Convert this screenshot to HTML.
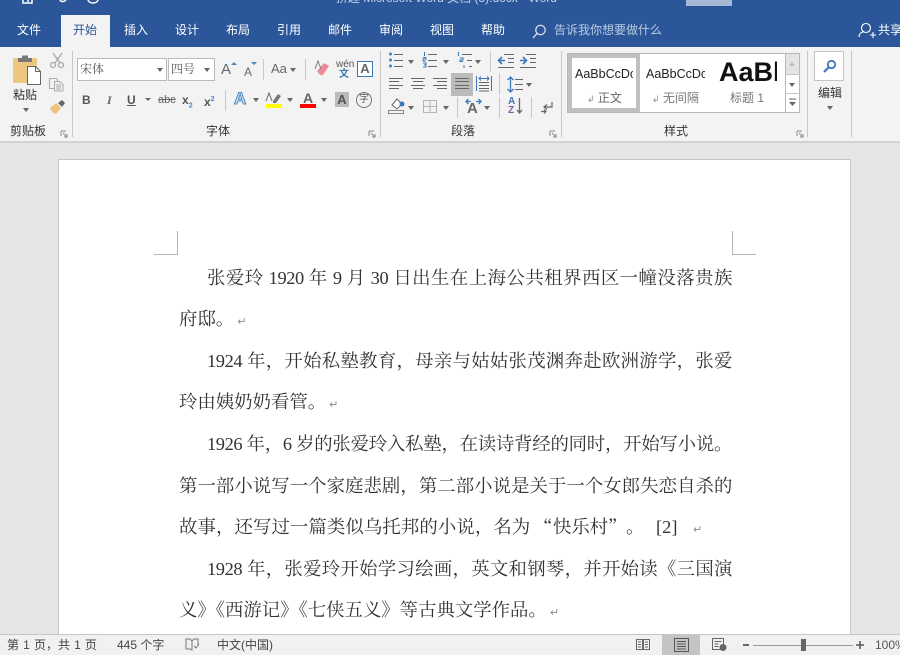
<!DOCTYPE html>
<html><head><meta charset="utf-8">
<style>
*{margin:0;padding:0;box-sizing:border-box}
html,body{width:900px;height:655px;overflow:hidden;background:#e6e6e6}
body{position:relative;font-family:"Liberation Sans","Noto Sans CJK SC",sans-serif;color:#444}
.a{position:absolute;white-space:nowrap}
.tab{position:absolute;top:20px;font-size:12px;color:#fff;line-height:20px;white-space:nowrap}
.sep{position:absolute;width:1px;background:#c8c8c8}
.gl{position:absolute;top:122px;font-size:12px;color:#333;line-height:18px;white-space:nowrap}
.l{position:absolute;left:179px;width:553px;font-family:"Liberation Serif","Noto Serif CJK SC",serif;font-size:18.4px;line-height:26px;color:#333;text-align:justify;text-align-last:justify;height:26px;letter-spacing:-.4px}
.n{text-align-last:left;letter-spacing:0;white-space:nowrap}
.p{position:absolute;font-family:"Liberation Serif","Noto Serif CJK SC",serif;font-size:18.4px;line-height:26px;color:#333;white-space:nowrap;top:514px}
.s{position:absolute;font-size:12px;line-height:16px;color:#444;white-space:nowrap;top:637px}
.ar{position:absolute;width:0;height:0;border-left:3.5px solid transparent;border-right:3.5px solid transparent;border-top:4px solid #666}
svg{position:absolute;overflow:visible}
.m{font-size:11px;color:#888;font-family:"Liberation Sans","DejaVu Sans",sans-serif;margin-left:3px}
</style></head><body>

<!-- title + tabs -->
<div class="a" style="left:0;top:0;width:900px;height:47px;background:#2b579a"></div>
<div class="a" style="left:686px;top:0;width:46px;height:6px;background:#a5b8d4"></div>
<div class="a" style="left:336px;top:-9px;font-size:12px;color:#c5d2e6;line-height:14px">拼趣 Microsoft Word 文档 (3).docx - Word</div>
<svg style="left:20px;top:0" width="80" height="6"><path d="M3 0v3h9V0M8 0v2M40 0c1 2 4 2 6 0M68 0c1 4 9 4 10 0" stroke="#fff" stroke-width="1.5" fill="none"/></svg>
<div class="a" style="left:61px;top:15px;width:49px;height:32px;background:#f3f3f3"></div>
<div class="tab" style="left:17px">文件</div>
<div class="tab" style="left:73px;color:#2b579a">开始</div>
<div class="tab" style="left:124px">插入</div>
<div class="tab" style="left:175px">设计</div>
<div class="tab" style="left:226px">布局</div>
<div class="tab" style="left:277px">引用</div>
<div class="tab" style="left:328px">邮件</div>
<div class="tab" style="left:379px">审阅</div>
<div class="tab" style="left:430px">视图</div>
<div class="tab" style="left:481px">帮助</div>
<svg style="left:532px;top:24px" width="15" height="15"><circle cx="8.5" cy="6" r="4.7" fill="none" stroke="#dfe6f1" stroke-width="1.2"/><path d="M5 9.5L1 14" stroke="#dfe6f1" stroke-width="1.3"/></svg>
<div class="tab" style="left:554px;color:#bccbe1">告诉我你想要做什么</div>
<svg style="left:858px;top:22px" width="18" height="17"><circle cx="8" cy="6" r="4.5" fill="none" stroke="#fff" stroke-width="1.1"/><path d="M1 15c0-4 3-5 5-5.500M12 13h6M15 10v6" fill="none" stroke="#fff" stroke-width="1.1"/></svg>
<div class="tab" style="left:878px">共享</div>

<!-- ribbon -->
<div class="a" style="left:0;top:47px;width:900px;height:94px;background:#f3f3f3"></div>
<div class="a" style="left:0;top:141px;width:900px;height:2px;background:#d2d2d2"></div>

<!-- clipboard -->
<svg style="left:0;top:0" width="72" height="120">
<rect x="13" y="58" width="24" height="25" rx="1.500" fill="#eec77f"/>
<path d="M18 58h14v4H18z" fill="#777"/><path d="M22 55.500h6v3h-6z" fill="#777"/>
<path d="M27.500 66.500h8l5 5v13h-13z" fill="#fff" stroke="#666"/><path d="M35.500 66.500v5h5" fill="none" stroke="#666"/>
<path d="M53 53l7 10M62 53l-7 10" stroke="#aaa" stroke-width="1.400" fill="none"/><circle cx="53" cy="65" r="2.500" fill="none" stroke="#aaa" stroke-width="1.300"/><circle cx="61" cy="65" r="2.500" fill="none" stroke="#aaa" stroke-width="1.300"/>
<path d="M49.500 78.500h7l1 1v9h-8z" fill="#f3f3f3" stroke="#aaa"/><path d="M54.500 81.500h5l3.500 3v6.500h-8.500z" fill="#f3f3f3" stroke="#aaa"/><path d="M56 85h5M56 87h5M56 89h5" stroke="#aaa"/>
<path d="M50 108l6-5 5 5-5 6c-3-1-5-3-6-6z" fill="#ecc27c"/><path d="M58 103l4-3 3 3-3 4z" fill="#666"/>
</svg>
<div class="a" style="left:13px;top:87px;font-size:12px;color:#333;line-height:16px">粘贴</div>
<div class="ar" style="left:23px;top:108px"></div>
<div class="gl" style="left:10px">剪贴板</div>
<div class="sep" style="left:72px;top:51px;height:86px"></div>

<!-- font -->
<div class="a" style="left:77px;top:58px;width:90px;height:23px;background:#fff;border:1px solid #bbb;font-size:12px;line-height:21px;padding-left:2px;color:#555;font-family:'Liberation Serif','Noto Serif CJK SC',serif">宋体</div>
<div class="ar" style="left:157px;top:68px"></div>
<div class="a" style="left:168px;top:58px;width:47px;height:23px;background:#fff;border:1px solid #bbb;font-size:12px;line-height:21px;padding-left:2px;color:#555;font-family:'Liberation Serif','Noto Serif CJK SC',serif">四号</div>
<div class="ar" style="left:204px;top:68px"></div>
<div class="a" style="left:221px;top:60px;font-size:15px;line-height:20px;color:#666">A</div>
<div class="a" style="left:244px;top:63px;font-size:12px;line-height:18px;color:#666">A</div>
<div class="a" style="left:231px;top:62px;width:0;border-left:3px solid transparent;border-right:3px solid transparent;border-bottom:3px solid #4a86c5"></div>
<div class="a" style="left:251px;top:62px;width:0;border-left:3px solid transparent;border-right:3px solid transparent;border-top:3px solid #4a86c5"></div>
<div class="sep" style="left:263px;top:59px;height:21px"></div>
<div class="a" style="left:271px;top:60px;font-size:13px;line-height:18px;color:#666">Aa</div>
<div class="ar" style="left:290px;top:68px"></div>
<div class="sep" style="left:305px;top:59px;height:21px"></div>
<svg style="left:314px;top:60px" width="16" height="17"><path d="M3 11l7-8 5 3-6 9H6z" fill="#ee8b98"/><path d="M1 9L4 1l3 8" fill="none" stroke="#777"/></svg>
<div class="a" style="left:336px;top:59px;font-size:10px;line-height:11px;color:#555">wén</div>
<div class="a" style="left:339px;top:69px;font-size:10px;line-height:11px;color:#3a75b5;font-weight:bold">文</div>
<div class="a" style="left:357px;top:61px;width:16px;height:16px;border:1px solid #3c78b5;background:#fff;font-size:13px;font-weight:bold;line-height:14px;text-align:center;color:#666">A</div>

<div class="a" style="left:82px;top:91px;font-size:12px;font-weight:bold;line-height:18px;color:#555">B</div>
<div class="a" style="left:107px;top:91px;font-size:12px;font-style:italic;font-family:'Liberation Serif',serif;font-weight:bold;line-height:18px;color:#666">I</div>
<div class="a" style="left:127px;top:91px;font-size:12px;font-weight:bold;line-height:18px;color:#555;text-decoration:underline">U</div>
<div class="ar" style="left:145px;top:98px;border-top-width:3px"></div>
<div class="a" style="left:158px;top:92px;font-size:11px;line-height:17px;color:#666;text-decoration:line-through">abc</div>
<div class="a" style="left:182px;top:91px;font-size:12px;font-weight:bold;line-height:18px;color:#555">x<sub style="font-size:7px;color:#4a86c5">2</sub></div>
<div class="a" style="left:204px;top:91px;font-size:12px;font-weight:bold;line-height:18px;color:#555">x<sup style="font-size:7px;color:#4a86c5">2</sup></div>
<div class="sep" style="left:225px;top:90px;height:21px"></div>
<div class="a" style="left:234px;top:89px;font-size:17px;font-weight:bold;line-height:20px;color:#dbe8f5;-webkit-text-stroke:1px #4a86c5">A</div>
<div class="ar" style="left:253px;top:98px"></div>
<svg style="left:265px;top:92px" width="18" height="16"><path d="M8 9l5-7 3 2-5 7H8z" fill="#777"/><path d="M1 9l3-8 3 8" fill="none" stroke="#666"/><rect x="1" y="12" width="16" height="4" fill="#ff0"/></svg>
<div class="ar" style="left:287px;top:98px"></div>
<div class="a" style="left:300px;top:91px;width:16px;height:14px;font-size:14px;font-weight:bold;line-height:14px;text-align:center;color:#666">A</div>
<div class="a" style="left:300px;top:104px;width:16px;height:4px;background:#f00"></div>
<div class="ar" style="left:321px;top:98px"></div>
<div class="a" style="left:335px;top:92px;width:14px;height:15px;background:#bbb;font-size:13px;font-weight:bold;line-height:15px;text-align:center;color:#555">A</div>
<div class="a" style="left:356px;top:92px;width:16px;height:16px;border:1px solid #777;border-radius:50%;font-size:10px;line-height:14px;text-align:center;color:#555">字</div>
<div class="gl" style="left:206px">字体</div>
<svg style="left:60px;top:130px" width="320" height="8"><path d="M1 1h5M1 1v5M3 3l4 4M4 7h3V4" stroke="#888" fill="none"/><path d="M309 1h5M309 1v5M311 3l4 4M312 7h3V4" stroke="#888" fill="none"/></svg>
<div class="sep" style="left:380px;top:51px;height:86px"></div>

<!-- paragraph: highlight first -->
<div class="a" style="left:451px;top:73px;width:22px;height:23px;background:#bbb"></div>
<svg style="left:0;top:0" width="560" height="120" fill="none">
<!-- row1 bullets -->
<g fill="#4a7fb8"><circle cx="390.500" cy="54" r="1.500"/><circle cx="390.500" cy="60" r="1.500"/><circle cx="390.500" cy="66" r="1.500"/></g>
<path d="M394 54.500h9M394 60.500h9M394 66.500h9" stroke="#666"/>
<!-- numbering -->
<path d="M424.500 52v4M423 57.500h3v1.500h-3v2h3M423 63h3v1.800h-2M426 64.800V67h-3" stroke="#3c78b5"/>
<path d="M428 54.500h9M428 60.500h9M428 66.500h9" stroke="#666"/>
<!-- multilevel -->
<path d="M458.500 52v4M460 58h3v2h-3v1.500h3M464 65v3" stroke="#3c78b5"/>
<path d="M462 54.500h10M467 60.500h5M469 66.500h3" stroke="#666"/>
<!-- indent -->
<path d="M504 54.500h10M508 58.500h6M508 62.500h6M498 67.500h16" stroke="#666"/>
<path d="M505 60.500h-6M502 57l-3.500 3.500 3.500 3.500" stroke="#3c78b5" stroke-width="1.600"/>
<path d="M526 54.500h10M530 58.500h6M530 62.500h6M520 67.500h16" stroke="#666"/>
<path d="M520 60.500h6M523 57l3.500 3.500-3.500 3.500" stroke="#3c78b5" stroke-width="1.600"/>
<!-- align -->
<path d="M389 78.500h14M389 81.500h10M389 85.500h14M389 88.500h10" stroke="#666"/>
<path d="M411 78.500h14M413 81.500h10M411 85.500h14M413 88.500h10" stroke="#666"/>
<path d="M433 78.500h14M437 81.500h10M433 85.500h14M437 88.500h10" stroke="#666"/>
<path d="M455 78.500h14M455 81.500h14M455 85.500h14M455 88.500h14" stroke="#666"/>
<!-- distributed -->
<path d="M476.500 76v15M491.500 76v15" stroke="#3c78b5"/><path d="M479 78.500h10M481 76.500l-2 2 2 2M487 76.500l2 2-2 2" stroke="#3c78b5"/>
<path d="M479 82.500h10M479 85.500h10M479 88.500h10M479 91h10" stroke="#666"/>
<!-- line spacing -->
<path d="M510.500 77v15M507.500 80l3-3 3 3M507.500 89l3 3 3-3" stroke="#3c78b5" stroke-width="1.300"/>
<path d="M515 79.500h8M515 84.500h8M515 89.500h8" stroke="#666"/>
<!-- shading -->
<path d="M392 105l5-6 5 5-5 5z" fill="#fff" stroke="#666"/><circle cx="402" cy="104" r="2.500" fill="#3c78b5"/>
<rect x="388.500" y="110.500" width="15" height="3" fill="#f3f3f3" stroke="#888"/>
<!-- borders -->
<path d="M423.500 100.500h13v12h-13zM430 100.500v12M423.500 106.500h13" stroke="#777" stroke-dasharray="1 1"/>
<!-- char spacing arrows -->
<path d="M466 101.500h5M468.500 99l-2.500 2.500 2.500 2.500M476 101.500h5M478.500 99l2.500 2.500-2.500 2.500" stroke="#3c78b5" stroke-width="1.300"/>
<!-- sort arrow -->
<path d="M519.500 98v15M517 110l2.500 3 2.500-3" stroke="#666" stroke-width="1.300"/>
<!-- enter -->
<path d="M552 102v5h-7M547 104.500l-3 2.500 3 2.500" stroke="#666" stroke-width="1.200"/><path d="M541 111.500h5M544 109.500l2 2-2 2" stroke="#666" stroke-width="1.200"/>
</svg>
<div class="ar" style="left:408px;top:60px"></div>
<div class="ar" style="left:443px;top:60px"></div>
<div class="ar" style="left:475px;top:60px"></div>
<div class="sep" style="left:490px;top:52px;height:20px"></div>
<div class="sep" style="left:499px;top:73px;height:22px"></div>
<div class="ar" style="left:526px;top:83px"></div>
<div class="ar" style="left:408px;top:106px"></div>
<div class="ar" style="left:443px;top:106px"></div>
<div class="sep" style="left:457px;top:97px;height:21px"></div>
<div class="a" style="left:467px;top:103px;font-size:15px;font-weight:bold;line-height:12px;color:#666">A</div>
<div class="ar" style="left:484px;top:106px"></div>
<div class="sep" style="left:499px;top:97px;height:21px"></div>
<div class="a" style="left:508px;top:97px;font-size:10px;font-weight:bold;line-height:9px;color:#3c78b5">A</div>
<div class="a" style="left:508px;top:106px;font-size:10px;font-weight:bold;line-height:9px;color:#8a5aa8">Z</div>
<div class="sep" style="left:531px;top:97px;height:21px"></div>
<div class="gl" style="left:451px">段落</div>
<svg style="left:549px;top:130px" width="9" height="8"><path d="M1 1h5M1 1v5M3 3l4 4M4 7h3V4" stroke="#888" fill="none"/></svg>
<div class="sep" style="left:561px;top:51px;height:86px"></div>

<!-- styles -->
<div class="a" style="left:567px;top:53px;width:233px;height:60px;background:#fff;border:1px solid #b8b8b8"></div>
<div class="a" style="left:568px;top:54px;width:72px;height:58px;background:#fff;border:4px solid #c0c0c0"></div>
<div class="a" style="left:575px;top:66px;width:58px;overflow:hidden;font-size:12.500px;line-height:16px;color:#222">AaBbCcDc</div>
<div class="a" style="left:646px;top:66px;width:59px;overflow:hidden;font-size:12.500px;line-height:16px;color:#222">AaBbCcDc</div>
<div class="a" style="left:719px;top:55px;width:58px;overflow:hidden;font-size:27px;font-weight:bold;line-height:34px;color:#111">AaBbC</div>
<div class="a" style="left:587px;top:90px;font-size:12px;line-height:16px;color:#666"><span style="font-size:9px;color:#888">↲</span> 正文</div>
<div class="a" style="left:652px;top:90px;font-size:12px;line-height:16px;color:#777"><span style="font-size:9px;color:#888">↲</span> 无间隔</div>
<div class="a" style="left:730px;top:90px;font-size:12px;line-height:16px;color:#777">标题 1</div>
<div class="a" style="left:785px;top:53px;width:15px;height:60px;border:1px solid #b8b8b8;background:#fff"></div>
<div class="a" style="left:786px;top:54px;width:13px;height:20px;background:#e4e4e4"></div>
<div class="sep" style="left:785px;top:74px;width:15px;height:1px"></div>
<div class="sep" style="left:785px;top:93px;width:15px;height:1px"></div>
<div class="a" style="left:789px;top:62px;border-left:3.500px solid transparent;border-right:3.500px solid transparent;border-bottom:4px solid #bbb"></div>
<div class="ar" style="left:789px;top:83px"></div>
<svg style="left:789px;top:99px" width="8" height="9"><path d="M0 0h7" stroke="#666"/><path d="M0 3h7L3.500 7z" fill="#666"/></svg>
<div class="gl" style="left:664px">样式</div>
<svg style="left:796px;top:130px" width="9" height="8"><path d="M1 1h5M1 1v5M3 3l4 4M4 7h3V4" stroke="#888" fill="none"/></svg>
<div class="sep" style="left:807px;top:51px;height:86px"></div>

<!-- edit -->
<div class="a" style="left:814px;top:51px;width:30px;height:30px;background:#fff;border:1px solid #c4c4c4"></div>
<svg style="left:822px;top:59px" width="15" height="15" fill="none"><circle cx="9.500" cy="5.500" r="3.700" stroke="#3c78b5" stroke-width="1.800"/><path d="M6.500 8.500L2 13" stroke="#3c78b5" stroke-width="2.200"/></svg>
<div class="a" style="left:818px;top:85px;font-size:12px;line-height:16px;color:#333">编辑</div>
<div class="ar" style="left:827px;top:106px"></div>
<div class="sep" style="left:851px;top:51px;height:86px"></div>

<!-- document -->
<div class="a" style="left:0;top:143px;width:900px;height:490px;background:#e6e6e6"></div>
<div class="a" style="left:58px;top:159px;width:793px;height:480px;background:#fff;border:1px solid #c6c6c6"></div>
<svg style="left:154px;top:231px" width="603" height="24" fill="none"><path d="M23.500 0v23.500H0M578.500 0v23.500H602" stroke="#b4b4b4"/></svg>

<div class="l" style="left:207px;width:525px;top:265px">张爱玲 1920 年 9 月 30 日出生在上海公共租界西区一幢没落贵族</div>
<div class="l n" style="top:306px">府邸。<span class="m">↵</span></div>
<div class="l" style="left:207px;width:525px;top:348px">1924 年，开始私塾教育，母亲与姑姑张茂渊奔赴欧洲游学，张爱</div>
<div class="l n" style="top:389px">玲由姨奶奶看管。<span class="m">↵</span></div>
<div class="l" style="left:207px;width:525px;top:431px">1926 年，6 岁的张爱玲入私塾，在读诗背经的同时，开始写小说。</div>
<div class="l" style="top:473px">第一部小说写一个家庭悲剧，第二部小说是关于一个女郎失恋自杀的</div>
<div class="p" style="left:179px;letter-spacing:.1px">故事，还写过一篇类似乌托邦的小说，名为</div>
<div class="p" style="left:534px;font-family:'Noto Serif CJK SC',serif">“</div>
<div class="p" style="left:553px">快乐村</div>
<div class="p" style="left:608px;font-family:'Noto Serif CJK SC',serif">”</div>
<div class="p" style="left:626px">。</div>
<div class="p" style="left:656px">[2]</div>
<div class="p" style="left:690px"><span class="m">↵</span></div>
<div class="l" style="left:207px;width:525px;top:556px">1928 年，张爱玲开始学习绘画，英文和钢琴，并开始读《三国演</div>
<div class="l n" style="top:597px">义》《西游记》《七侠五义》等古典文学作品。<span class="m">↵</span></div>

<!-- status -->
<div class="a" style="left:0;top:634px;width:900px;height:1px;background:#c6c6c6"></div>
<div class="a" style="left:0;top:635px;width:900px;height:20px;background:#f1f1f1"></div>
<div class="s" style="left:7px;word-spacing:.8px">第 1 页，共 1 页</div>
<div class="s" style="left:117px">445 个字</div>
<svg style="left:185px;top:638px" width="15" height="13" fill="none"><path d="M1 1h4l2 2v9l-2-1H1zM7 3l2-2h4v6" stroke="#777"/><path d="M9 8l2 2 3-4" stroke="#777"/></svg>
<div class="s" style="left:217px">中文(中国)</div>
<svg style="left:636px;top:638px" width="14" height="13" fill="none"><path d="M.5 1.500h6v10h-6zM7.500 1.500h6v10h-6zM2 4h3M2 6.500h3M2 9h3M9 4h3M9 6.500h3M9 9h3" stroke="#666"/></svg>
<div class="a" style="left:662px;top:635px;width:38px;height:20px;background:#c4c4c4"></div>
<svg style="left:674px;top:638px" width="15" height="14" fill="none"><path d="M.5.500h14v13H.5zM3 3.500h9M3 6h9M3 8.500h9M3 11h9" stroke="#555"/></svg>
<svg style="left:712px;top:638px" width="15" height="14" fill="none"><path d="M.5.500h11v11H.5zM2.500 3.500h7M2.500 6h4M2.500 8.500h4" stroke="#666"/><circle cx="11" cy="9.500" r="3.500" fill="#666"/></svg>
<div class="a" style="left:743px;top:644px;width:6px;height:2px;background:#666"></div>
<div class="a" style="left:753px;top:645px;width:100px;height:1px;background:#999"></div>
<div class="a" style="left:801px;top:639px;width:5px;height:12px;background:#666"></div>
<svg style="left:856px;top:640px" width="10" height="10"><path d="M0 5h8M4 1v8" stroke="#555" stroke-width="1.500"/></svg>
<div class="s" style="left:875px;color:#555">100%</div>
</body></html>
